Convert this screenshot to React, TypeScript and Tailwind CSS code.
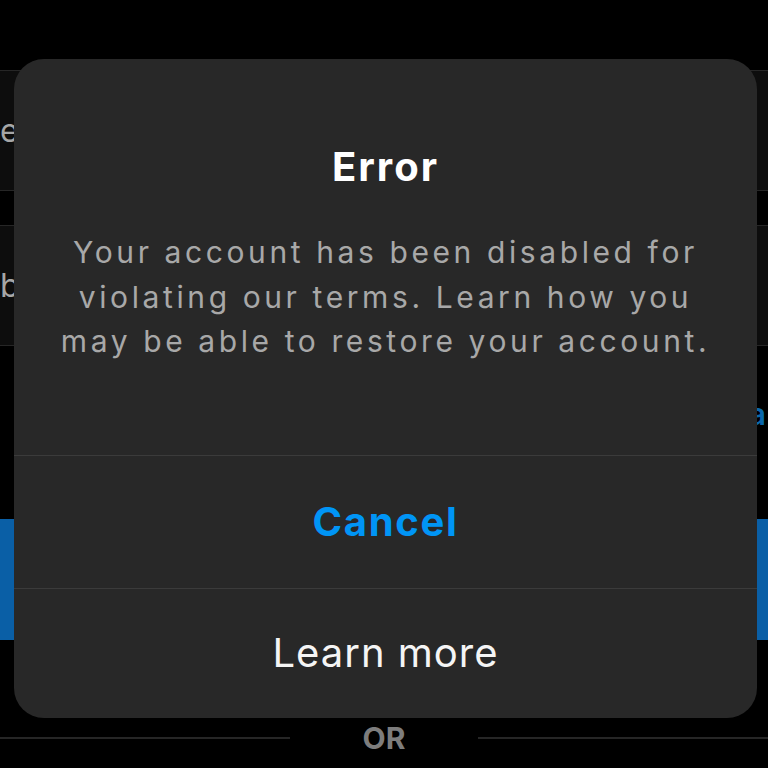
import React from "react";

export default function App() {
  const font = { fontFamily: "Inter, 'Noto Sans', 'Liberation Sans', sans-serif" };
  return (
    <div className="relative w-[768px] h-[768px] bg-black overflow-hidden" style={font}>
      {/* background login screen */}
      <div className="flex flex-col pt-[70px]">
        <div className="h-[121px] border-y border-[#262626] bg-[#0d0d0d] flex items-center text-[32px] text-[#a6a6a6]">
          <span className="ml-0">e</span>
        </div>
        <div className="h-[34px]" />
        <div className="h-[121px] border-y border-[#262626] bg-[#0d0d0d] flex items-center text-[32px] text-[#a6a6a6]">
          <span className="ml-0">b</span>
        </div>
        <div className="h-[48px] mt-[44px] flex justify-end items-center pr-[2px] text-[30px] font-semibold text-[#0a68ad]">
          <span>Forgot pa</span>
        </div>
        <div className="h-[121px] mt-[81px] bg-[#0a5fa6]" />
        <div className="mt-[80px] flex items-center">
          <div className="flex-1 h-[2px] bg-[#262626]" />
          <span className="w-[188px] text-center text-[30px] font-bold text-[#7d7d7d] leading-[36px]">OR</span>
          <div className="flex-1 h-[2px] bg-[#262626]" />
        </div>
      </div>

      {/* dialog */}
      <div className="absolute left-[14px] top-[59px] w-[743px] h-[659px] rounded-[30px] bg-[#282828] flex flex-col">
        <div className="flex flex-col items-center pt-[84px] pb-[91px] px-[20px]">
          <div className="text-[40px] leading-[48px] font-bold text-white tracking-[2px]">Error</div>
          <div className="mt-[39px] text-[30px] leading-[44.5px] text-[#a8a8a8] text-center tracking-[3.6px]">
            Your account has been disabled for
            <br />
            violating our terms. Learn how you
            <br />
            may be able to restore your account.
          </div>
        </div>
        <div className="h-[133px] border-t border-[#3b3b3b] flex items-center justify-center">
          <span className="text-[40px] font-bold text-[#0095f6] tracking-[1.7px]">Cancel</span>
        </div>
        <div className="flex-1 border-t border-[#3b3b3b] flex items-center justify-center">
          <span className="text-[40px] text-[#f5f5f5] tracking-[1px]">Learn more</span>
        </div>
      </div>
    </div>
  );
}
